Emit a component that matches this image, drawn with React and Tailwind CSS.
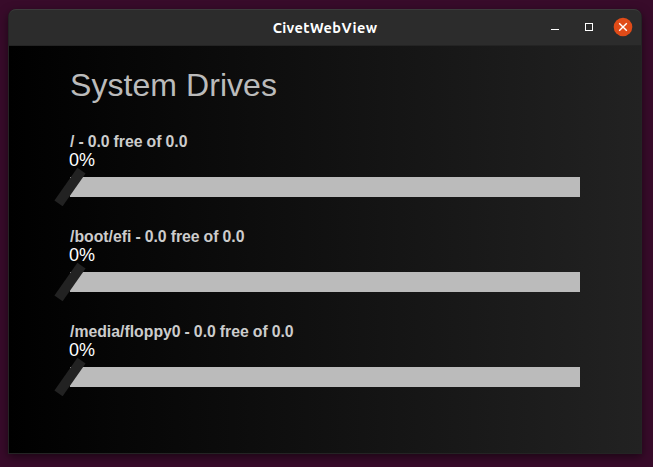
const drives = [
  { name: '/', free: '0.0', total: '0.0', used: 0 },
  { name: '/boot/efi', free: '0.0', total: '0.0', used: 0 },
  { name: '/media/floppy0', free: '0.0', total: '0.0', used: 0 },
];

function TitleBar() {
  return (
    <header className="grid h-[37px] shrink-0 grid-cols-[1fr_auto_1fr] items-center rounded-t-[7px] border-t border-b border-t-[#3c3c3c] border-b-[#242424] bg-[#2c2c2c]">
      <span />
      <h1 className="pt-px font-['Ubuntu','Noto_Sans',sans-serif] text-[14.5px] leading-[20px] font-bold tracking-[0.4px] text-white">
        CivetWebView
      </h1>
      <div className="flex items-center justify-end pr-[9px] pb-px">
        <button aria-label="Minimize" className="mr-[26px] block">
          <svg className="block" width="8" height="8" viewBox="0 0 8 8" fill="#fff">
            <rect y="6" width="8" height="1" />
          </svg>
        </button>
        <button aria-label="Maximize" className="mr-[21px] block">
          <svg className="block" width="8" height="8" viewBox="0 0 8 8" fill="none" stroke="#fff">
            <rect x="0.5" y="0.5" width="7" height="7" />
          </svg>
        </button>
        <button aria-label="Close" className="block">
          <svg className="block overflow-visible" width="18" height="18" viewBox="0 0 18 18">
            <circle cx="9" cy="9" r="9.3" fill="#e04b18" />
            <path d="M5.2 5.2l7.6 7.6M12.8 5.2l-7.6 7.6" stroke="#fff" strokeWidth="1.4" />
          </svg>
        </button>
      </div>
    </header>
  );
}

function Drive({ name, free, total, used }) {
  return (
    <section className="h-[95px]">
      <h3 className="text-[15.8px] leading-[18px] font-bold text-[#ccc] [word-spacing:-0.4px]">
        {name} - {free} free of {total}
      </h3>
      <p className="-ml-px text-[18px] leading-[18px] text-white">{used}%</p>
      <div className="relative mt-[8px] h-[20px] bg-[#bbb]">
        <span
          className="absolute -top-[10px] -ml-[5px] h-[40px] w-[10px] rotate-[35deg] bg-[#222]"
          style={{ left: `${used}%` }}
        />
      </div>
    </section>
  );
}

export default function App() {
  return (
    <div className="h-[467px] w-[653px] overflow-hidden bg-[#380b2a] pt-[9px] pl-[8px]">
      <div className="flex h-[445px] w-[634px] flex-col rounded-t-[8px] border border-t-0 border-[#242424] bg-[#242424] shadow-[0_3px_10px_rgba(0,0,0,0.5)]">
        <TitleBar />
        <main className="flex-1 bg-[linear-gradient(to_right,#000,#222)] pt-[20px] pr-[61px] pl-[61px] font-['Liberation_Sans',Arial,sans-serif]">
          <h2 className="mb-[29px] text-[32px] leading-[38px] tracking-[0.06px] text-[#bbb]">System Drives</h2>
          {drives.map((drive) => (
            <Drive key={drive.name} {...drive} />
          ))}
        </main>
      </div>
    </div>
  );
}
